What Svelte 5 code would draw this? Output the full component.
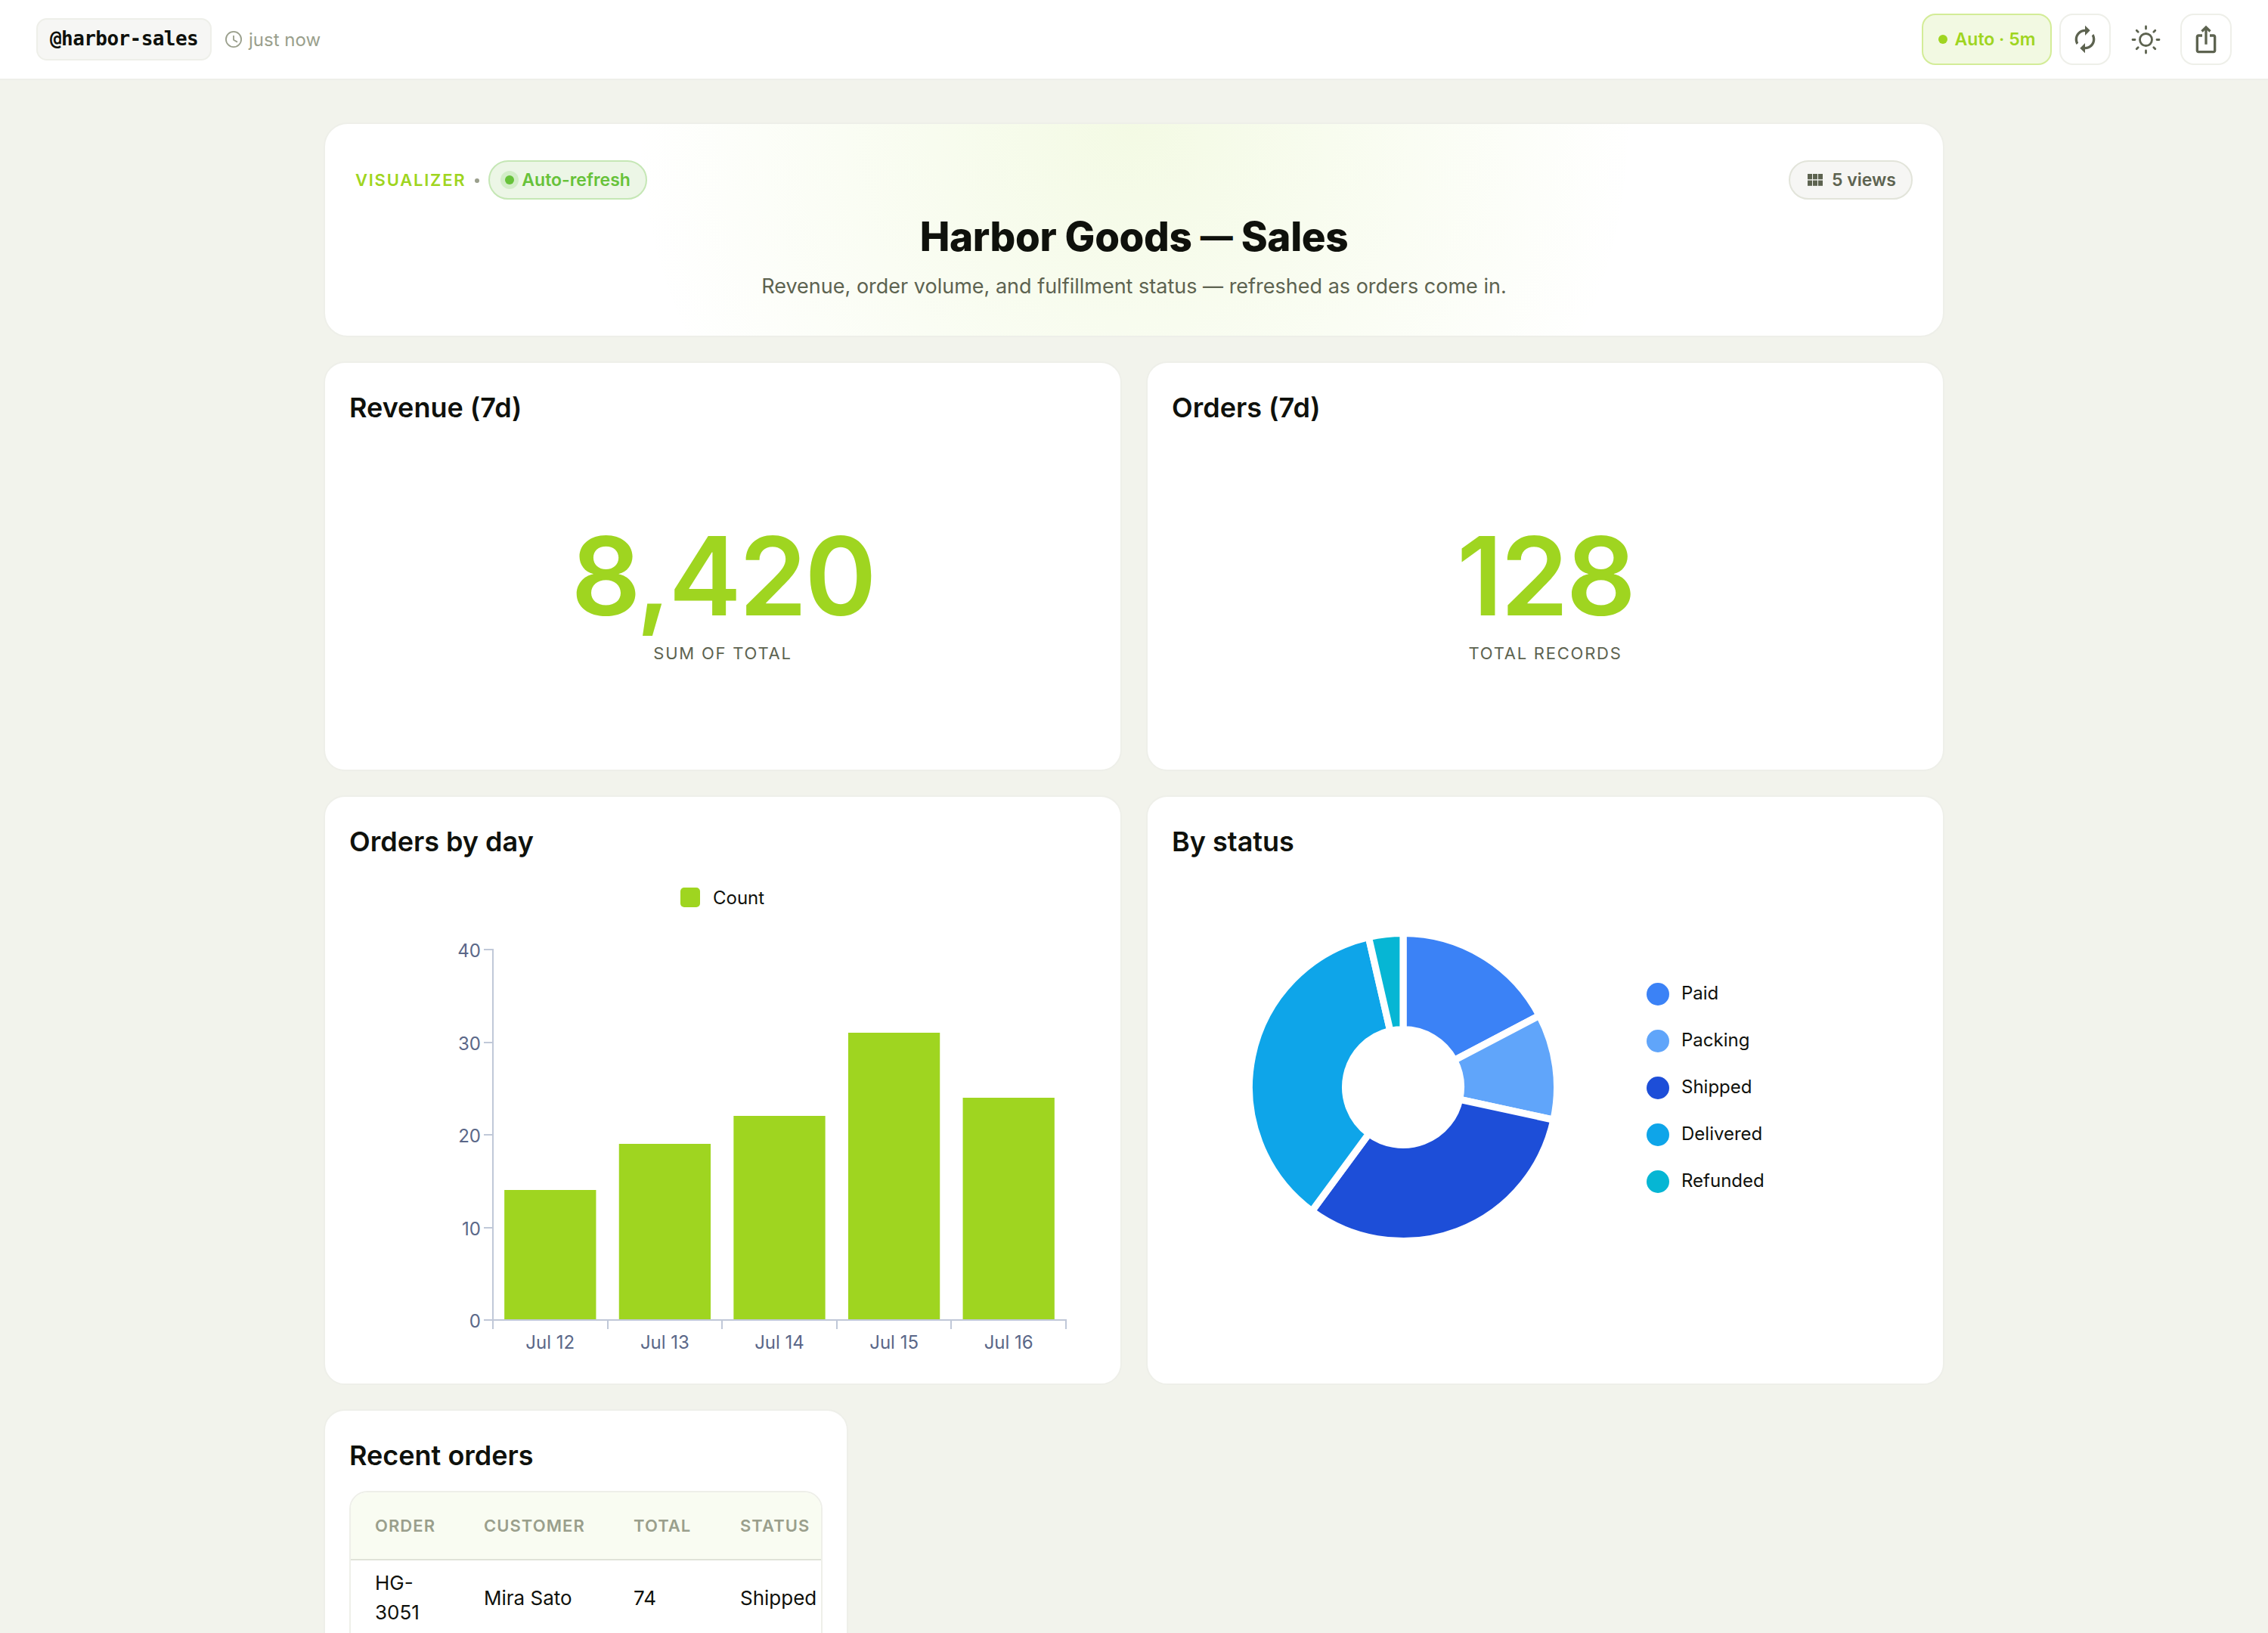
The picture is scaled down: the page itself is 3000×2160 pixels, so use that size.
<script lang="ts">
	interface Slice {
		label: string;
		share: number;
		color: string;
	}

	const accent = "#9fd520";

	const metrics = [
		{ title: "Revenue (7d)", value: "8,420", caption: "Sum of total" },
		{ title: "Orders (7d)", value: "128", caption: "Total records" },
	];

	const days = [
		{ label: "Jul 12", count: 14 },
		{ label: "Jul 13", count: 19 },
		{ label: "Jul 14", count: 22 },
		{ label: "Jul 15", count: 31 },
		{ label: "Jul 16", count: 24 },
	];

	const slices: Slice[] = [
		{ label: "Paid", share: 17.3, color: "#3b82f6" },
		{ label: "Packing", share: 11.1, color: "#60a5fa" },
		{ label: "Shipped", share: 31.7, color: "#1d4ed8" },
		{ label: "Delivered", share: 36.3, color: "#0ea5e9" },
		{ label: "Refunded", share: 3.6, color: "#06b6d4" },
	];

	const orders = [
		{ id: "HG-3051", customer: "Mira Sato", total: 74, status: "Shipped" },
	];

	// bar chart
	const axisX = 190;
	const axisY = 586;
	const step = 151.6;
	const unit = 12.25;
	const barWidth = step * 0.8;
	const ticks = [0, 10, 20, 30, 40];

	// donut
	const cx = 360;
	const cy = 278;
	const outer = 203.6;
	const inner = 76.4;

	function point(radius: number, share: number) {
		const angle = (share / 100) * Math.PI * 2;
		return `${cx + radius * Math.sin(angle)} ${cy - radius * Math.cos(angle)}`;
	}

	function arc(index: number) {
		const start = slices.slice(0, index).reduce((sum, s) => sum + s.share, 0);
		const end = start + slices[index].share;
		return `M${point(outer, start)}A${outer} ${outer} 0 0 1 ${point(outer, end)}L${point(inner, end)}A${inner} ${inner} 0 0 0 ${point(inner, start)}Z`;
	}
</script>

<div class="page">
	<header>
		<span class="handle">@harbor-sales</span>
		<span class="updated">
			<svg width="24" height="24" viewBox="0 0 24 24" fill="none" stroke="currentColor" stroke-width="1.8">
				<circle cx="12" cy="12" r="10.1" />
				<path d="M12 7v5.8l5 2.8" />
			</svg>
			just now
		</span>

		<div class="actions">
			<button class="auto"><i></i>Auto · 5m</button>
			<button aria-label="Refresh">
				<svg width="40" height="40" viewBox="0 0 24 24" fill="currentColor">
					<path d="M12 6v3l4-4-4-4v3c-4.42 0-8 3.58-8 8 0 1.57.46 3.03 1.24 4.26L6.7 14.8c-.45-.83-.7-1.79-.7-2.8 0-3.31 2.69-6 6-6zm6.76 1.74L17.3 9.2c.44.84.7 1.79.7 2.8 0 3.31-2.69 6-6 6v-3l-4 4 4 4v-3c4.42 0 8-3.58 8-8 0-1.57-.46-3.03-1.24-4.26z" />
				</svg>
			</button>
			<button class="plain" aria-label="Theme">
				<svg width="40" height="40" viewBox="0 0 40 40" fill="none" stroke="currentColor" stroke-width="2.8" stroke-linecap="round">
					<circle cx="20.5" cy="20.5" r="8" />
					<path d="M20.5 3v3M20.5 35v3M3 20.5h3M35 20.5h3M8.200 8.200l2 2M30.800 30.800l2 2M8.200 32.800l2-2M30.800 10.200l2-2" />
				</svg>
			</button>
			<button aria-label="Share">
				<svg width="40" height="40" viewBox="0 0 24 24" fill="currentColor">
					<path d="M16 5l-1.42 1.42-1.59-1.59V16h-1.98V4.83L9.42 6.42 8 5l4-4 4 4zm4 5v11c0 1.100-.9 2-2 2H6c-1.110 0-2-.9-2-2V10c0-1.110.89-2 2-2h3v2H6v11h12V10h-3V8h3c1.100 0 2 .89 2 2z" />
				</svg>
			</button>
		</div>
	</header>

	<main>
		<section class="hero">
			<div class="hero-top">
				<span class="eyebrow">Visualizer</span>
				<i class="bullet"></i>
				<span class="pill live"><i></i>Auto-refresh</span>
				<span class="pill views">
					<svg width="20" height="16" viewBox="0 0 20 16" fill="currentColor">
						{#each [0, 7, 14] as x}
							<rect {x} y="0" width="6" height="7.2" />
							<rect {x} y="8.6" width="6" height="7.2" />
						{/each}
					</svg>
					5 views
				</span>
			</div>
			<h1>Harbor Goods <span class="dash">—</span> Sales</h1>
			<p>Revenue, order volume, and fulfillment status — refreshed as orders come in.</p>
		</section>

		<div class="grid">
			{#each metrics as metric}
				<section class="card metric">
					<h2>{metric.title}</h2>
					<div class="metric-body">
						<strong>{metric.value}</strong>
						<span>{metric.caption}</span>
					</div>
				</section>
			{/each}

			<section class="card chart">
				<h2>Orders by day</h2>
				<svg width="988" height="638" viewBox="0 0 988 638">
					<rect x="438" y="14" width="26" height="26" rx="5" fill={accent} />
					<text x="481" y="35.5">Count</text>

					{#each days as day, i}
						<rect
							x={axisX + i * step + step * 0.1}
							y={Math.round(axisY - day.count * unit - 0.5)}
							width={barWidth}
							height={day.count * unit}
							fill={accent}
						/>
						<text class="axis-label" text-anchor="middle" x={axisX + (i + 0.5) * step} y="624">{day.label}</text>
					{/each}

					<g class="axis">
						<path d="M{axisX} {axisY - 491}V{axisY}M{axisX - 12} {axisY}H{axisX + step * 5 + 1}" />
						{#each ticks as tick}
							<path d="M{axisX - 12} {Math.round(axisY - tick * unit)}h12" />
						{/each}
						{#each [0, 1, 2, 3, 4, 5] as i}
							<path d="M{Math.round(axisX + i * step)} {axisY}v12" />
						{/each}
					</g>
					{#each ticks as tick}
						<text class="axis-label" text-anchor="end" x="174" y={axisY - tick * unit + 10}>{tick}</text>
					{/each}
				</svg>
			</section>

			<section class="card chart">
				<h2>By status</h2>
				<svg width="988" height="638" viewBox="-34 0 988 638">
					<g transform="translate(-88 0)">
						{#each slices as slice, i}
							<path d={arc(i)} fill={slice.color} stroke="#fff" stroke-width="9.2" />
						{/each}
					</g>
					{#each slices as slice, i}
						<circle cx="609" cy={155 + i * 62} r="15" fill={slice.color} />
						<text x="640" y={162 + i * 62}>{slice.label}</text>
					{/each}
				</svg>
			</section>
		</div>

		<section class="card recent">
			<h2>Recent orders</h2>
			<div class="table-wrap">
				<table>
					<colgroup>
						<col class="c-order" />
						<col class="c-customer" />
						<col class="c-total" />
						<col class="c-status" />
					</colgroup>
					<thead>
						<tr>
							<th>Order</th>
							<th>Customer</th>
							<th>Total</th>
							<th>Status</th>
						</tr>
					</thead>
					<tbody>
						{#each orders as order}
							<tr>
								<td>{order.id}</td>
								<td>{order.customer}</td>
								<td>{order.total}</td>
								<td>{order.status}</td>
							</tr>
						{/each}
					</tbody>
				</table>
			</div>
		</section>
	</main>
</div>

<style>
	:global(body) {
		background: #f2f3ec;
	}

	.page {
		--accent: #9fd520;
		--ink: #0f110c;
		--muted: #5d6350;
		--soft: #9a9f8c;
		--line: #eeefe9;
		height: 2160px;
		overflow: hidden;
		background: #f2f3ec;
		font-family: Inter, sans-serif;
		font-size: 26px;
		color: var(--ink);
	}

	.page * {
		box-sizing: border-box;
	}

	header {
		display: flex;
		align-items: center;
		height: 106px;
		padding: 0 48px;
		background: #fff;
		border-bottom: 2px solid var(--line);
	}

	.handle {
		height: 56px;
		width: 232px;
		padding: 0 16px;
		border: 2px solid var(--line);
		border-radius: 14px;
		background: #f6f6f4;
		font: 700 26px/50px "DejaVu Sans Mono", monospace;
		letter-spacing: -0.57px;
		white-space: nowrap;
	}

	.updated {
		display: flex;
		align-items: center;
		gap: 8px;
		margin-left: 17px;
		color: var(--soft);
		font-size: 24px;
	}

	.actions {
		display: flex;
		gap: 10px;
		margin-left: auto;
	}

	button {
		display: flex;
		align-items: center;
		justify-content: center;
		width: 68px;
		height: 68px;
		padding: 0;
		border: 2px solid var(--line);
		border-radius: 18px;
		background: #fff;
		color: var(--muted);
		font: 600 23px Inter, sans-serif;
	}

	button.plain {
		width: 72px;
		border-color: transparent;
	}

	button.auto {
		gap: 10px;
		width: 172px;
		border-color: #d3ec97;
		background: #f2f9e2;
		color: var(--accent);
	}

	.auto i {
		width: 12px;
		height: 12px;
		border-radius: 50%;
		background: var(--accent);
	}

	main {
		width: 2144px;
		margin: 0 auto;
		padding-top: 56px;
	}

	.hero {
		height: 284px;
		padding: 48px 40px 0;
		border: 2px solid var(--line);
		border-radius: 32px;
		background: radial-gradient(circle at 50% 0, rgba(160, 215, 34, 0.12), rgba(160, 215, 34, 0) 60%) #fff;
		text-align: center;
	}

	.hero-top {
		display: flex;
		align-items: center;
		height: 52px;
	}

	.eyebrow {
		color: var(--accent);
		font-size: 22px;
		font-weight: 600;
		letter-spacing: 1.76px;
		text-transform: uppercase;
	}

	.bullet {
		width: 6px;
		height: 6px;
		margin: 2px 12px 0 12px;
		border-radius: 50%;
		background: var(--soft);
	}

	.pill {
		display: flex;
		align-items: center;
		height: 52px;
		border: 2px solid;
		border-radius: 26px;
		font-size: 23px;
		font-weight: 600;
		white-space: nowrap;
	}

	.live {
		gap: 10px;
		width: 210px;
		padding-left: 20px;
		border-color: #c5e7b5;
		background: #ecf6e6;
		color: #67c23a;
	}

	.live i {
		width: 12px;
		height: 12px;
		border-radius: 50%;
		background: #67c23a;
		box-shadow: 0 0 0 6px #d3edc8;
	}

	.views {
		gap: 12px;
		width: 164px;
		margin-left: auto;
		padding-left: 23px;
		border-color: #e2e4da;
		background: #f6f6f4;
		color: var(--muted);
	}

	h1 {
		margin: 18px 0 0;
		font-size: 53px;
		font-weight: 800;
		line-height: 62px;
		letter-spacing: -0.35px;
	}

	.dash {
		font-size: 43px;
		line-height: 1;
		vertical-align: 4px;
	}

	.hero p {
		margin: 15px 0 0;
		color: var(--muted);
		font-size: 27px;
		line-height: 40px;
	}

	.grid {
		display: grid;
		grid-template-columns: 1fr 1fr;
		grid-template-rows: 542px 780px;
		gap: 32px;
		margin: 32px 0;
	}

	.card {
		padding: 32px;
		border: 2px solid var(--line);
		border-radius: 28px;
		background: #fff;
	}

	h2 {
		margin: 0 0 20px;
		font-size: 36px;
		font-weight: 600;
		line-height: 54px;
	}

	.metric-body {
		display: flex;
		flex-direction: column;
		align-items: center;
		padding-top: 104px;
	}

	.metric strong {
		color: var(--accent);
		font-size: 144px;
		font-weight: 600;
		line-height: 144px;
		letter-spacing: -2.88px;
	}

	.metric span {
		margin-top: 14px;
		color: var(--muted);
		font-size: 22px;
		line-height: 32px;
		letter-spacing: 1.76px;
		text-transform: uppercase;
	}

	.chart svg {
		display: block;
		font-size: 24px;
		fill: var(--ink);
	}

	.axis {
		fill: none;
		stroke: #c0c8d8;
		stroke-width: 2;
	}

	.axis-label {
		fill: #5a6788;
	}

	.recent {
		width: 694px;
		height: 600px;
	}

	.table-wrap {
		height: 440px;
		overflow: hidden;
		border: 2px solid var(--line);
		border-radius: 24px;
	}

	table {
		width: 680px;
		table-layout: fixed;
		border-collapse: separate;
		border-spacing: 0;
	}

	.c-order {
		width: 144px;
	}

	.c-customer {
		width: 198px;
	}

	.c-total {
		width: 141px;
	}

	th {
		height: 90px;
		padding: 0 0 0 32px;
		border-bottom: 2px solid #e0e3d8;
		background: #f9fcf2;
		color: var(--soft);
		font-size: 22px;
		font-weight: 600;
		letter-spacing: 1.05px;
		text-align: left;
		text-transform: uppercase;
	}

	td {
		padding: 10px 32px;
		font-size: 26px;
		line-height: 39px;
	}
</style>
